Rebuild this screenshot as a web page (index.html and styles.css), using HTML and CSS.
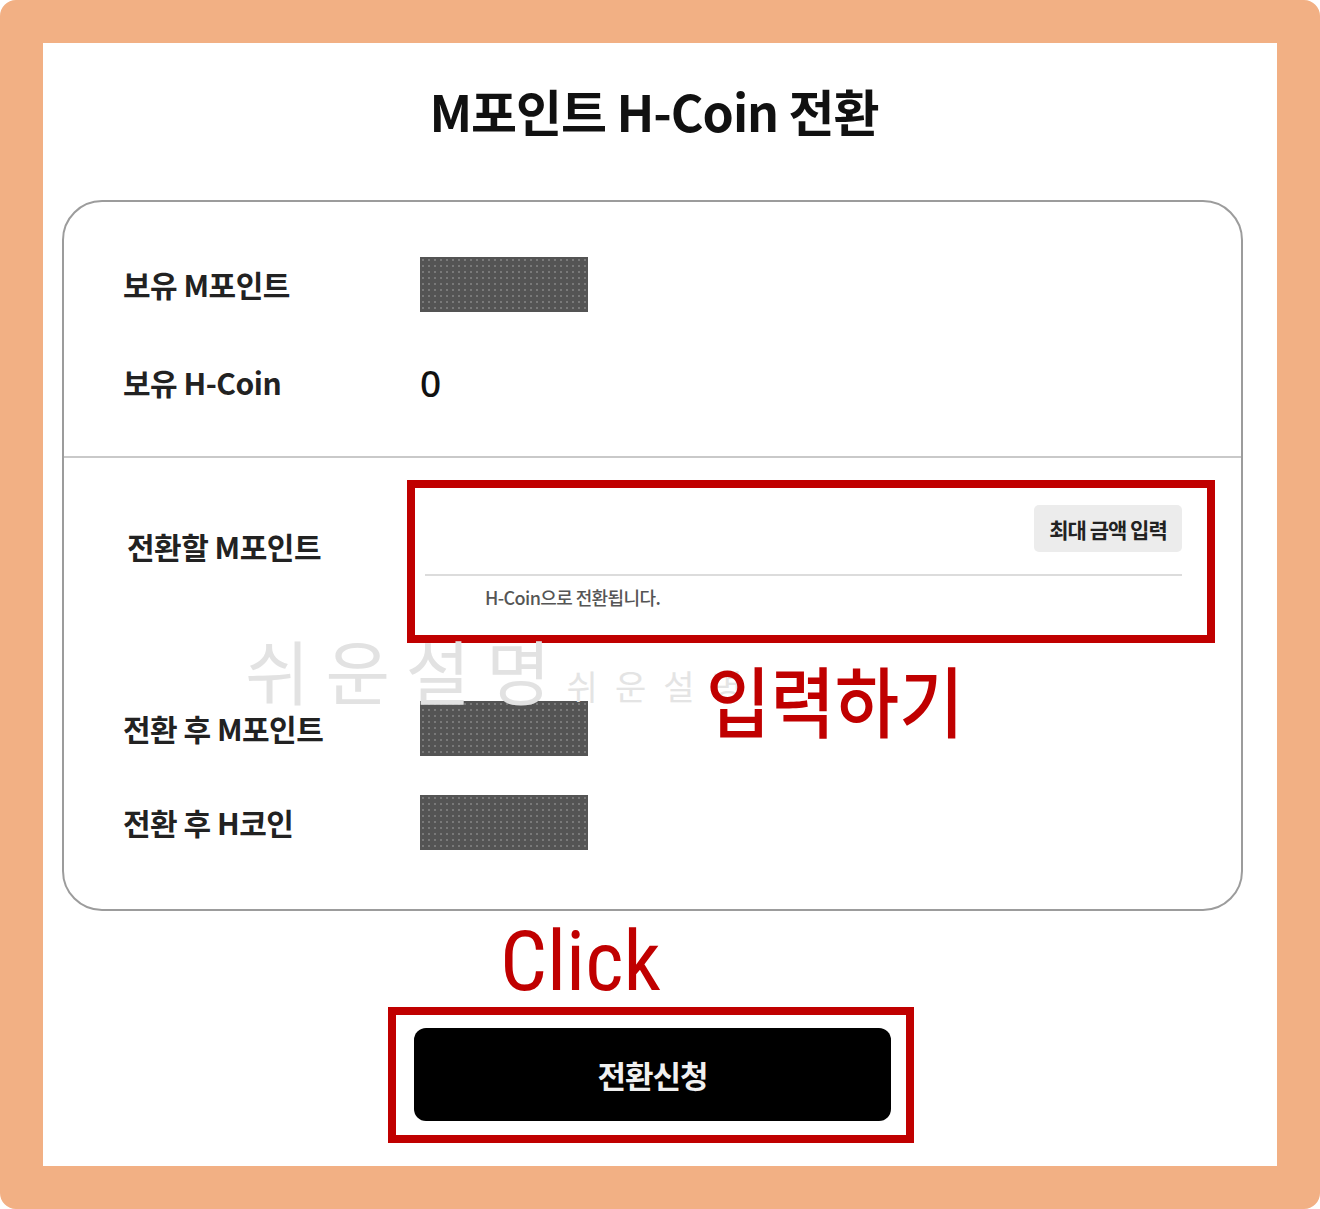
FILE: index.html
```html
<!DOCTYPE html>
<html>
  <head>
    <title>M포인트 H-Coin 전환</title>
    <link rel="stylesheet" href="styles.css">
  </head>
  <body>
    <div class="frame">
      <h1 class="title">M포인트 H-Coin 전환</h1>

      <div class="card">
        <div class="card-top">
          <div class="row">
            <span class="label">보유 M포인트</span>
            <span class="masked"></span>
          </div>
          <div class="row">
            <span class="label">보유 H-Coin</span>
            <span class="value">0</span>
          </div>
        </div>

        <div class="card-bottom">
          <div class="convert-row">
            <span class="label label-convert">전환할 M포인트</span>
            <div class="input-box">
              <div class="input-line">
                <button class="max-btn">최대 금액 입력</button>
              </div>
              <p class="hint">H-Coin으로 전환됩니다.</p>
            </div>
          </div>
          <div class="row row-after">
            <span class="label">전환 후 M포인트</span>
            <span class="masked"></span>
          </div>
          <div class="row row-last">
            <span class="label">전환 후 H코인</span>
            <span class="masked"></span>
          </div>
        </div>

        <div class="watermark">
          <span class="wm-big">쉬운설명</span>
          <span class="wm-small">쉬운설명</span>
        </div>
        <div class="note note-input">입력하기</div>
      </div>

      <div class="note note-click">Click</div>

      <div class="submit-wrap">
        <button class="submit-btn">전환신청</button>
      </div>
    </div>
  </body>
</html>
```

FILE: styles.css
```css
body {
  margin: 0;
  font-family: "Noto Sans CJK KR", "Noto Sans", sans-serif;
  color: #222;
}

.frame {
  width: 1320px;
  height: 1209px;
  box-sizing: border-box;
  border: 43px solid #f2b084;
  border-radius: 16px;
  background: #fff;
}

.title {
  margin: 37px 12px 0 0;
  height: 60px;
  line-height: 60px;
  font-size: 50px;
  font-weight: 700;
  text-align: center;
  letter-spacing: -1px;
  color: #111;
}

.card {
  position: relative;
  margin: 60px 34px 0 19px;
  border: 2px solid #9c9c9c;
  border-radius: 40px;
}

.card-top {
  padding: 54px 34px 46px 59px;
  border-bottom: 2px solid #c9c9c9;
}

.row {
  display: grid;
  grid-template-columns: 297px 1fr;
  align-items: center;
  height: 56px;
}

.card-top .row + .row {
  margin-top: 42px;
}

.label {
  font-size: 30px;
  font-weight: 700;
  letter-spacing: -0.5px;
  color: #222;
}

.value {
  font-family: "Noto Sans", sans-serif;
  font-size: 37px;
  font-weight: 500;
  color: #111;
}

.masked {
  width: 168px;
  height: 55px;
  background-color: #545454;
  background-image: radial-gradient(#7a7a7a 0.7px, transparent 1px);
  background-size: 6px 6px;
}

.card-bottom {
  padding: 30px 34px 59px 59px;
}

.convert-row {
  display: grid;
  grid-template-columns: 292px 792px;
}

.label-convert {
  margin: 36px 0 0 4px;
}

.input-box {
  height: 147px;
  box-sizing: border-box;
  padding: 17px 25px 0 10px;
  outline: 8px solid #c00000;
  background: #fff;
}

.input-line {
  display: flex;
  justify-content: flex-end;
  padding-bottom: 22px;
  border-bottom: 2px solid #dcdcdc;
}

.max-btn {
  width: 148px;
  height: 47px;
  border: none;
  border-radius: 5px;
  background: #ececec;
  font-family: "Noto Sans CJK KR", sans-serif;
  font-size: 21px;
  font-weight: 700;
  letter-spacing: -1px;
  color: #222;
}

.hint {
  margin: 11px 0 0 60px;
  line-height: 20px;
  font-size: 18px;
  font-weight: 500;
  letter-spacing: -0.6px;
  color: #555;
}

.row-after {
  margin-top: 65px;
}

.row-last {
  margin-top: 38px;
}

.watermark {
  position: absolute;
  left: 181px;
  top: 433px;
  display: flex;
  align-items: baseline;
  pointer-events: none;
}

.wm-big {
  font-size: 70px;
  line-height: 70px;
  letter-spacing: 16px;
  color: #e2e2e2;
}

.wm-small {
  font-size: 34px;
  letter-spacing: 17px;
  color: #e4e4e4;
}

.note {
  color: #c00000;
}

.note-input {
  position: absolute;
  left: 642px;
  top: 458px;
  font-size: 70px;
  line-height: 70px;
  font-weight: 500;
  letter-spacing: 0;
  transform: scaleY(1.1);
  transform-origin: top left;
}

.note-click {
  margin: 9px 0 0 457px;
  height: 84px;
  font-family: "Liberation Sans Narrow", "Roboto Condensed", Roboto, sans-serif;
  font-size: 83px;
  line-height: 84px;
}

.submit-wrap {
  width: 510px;
  height: 120px;
  box-sizing: border-box;
  margin: 11px 0 0 353px;
  padding: 13px 15px 14px 18px;
  outline: 8px solid #c00000;
}

.submit-btn {
  width: 477px;
  height: 93px;
  border: none;
  border-radius: 12px;
  background: #000;
  font-family: "Noto Sans CJK KR", sans-serif;
  font-size: 31px;
  font-weight: 700;
  color: #f0f0f0;
  letter-spacing: -1px;
}
```
